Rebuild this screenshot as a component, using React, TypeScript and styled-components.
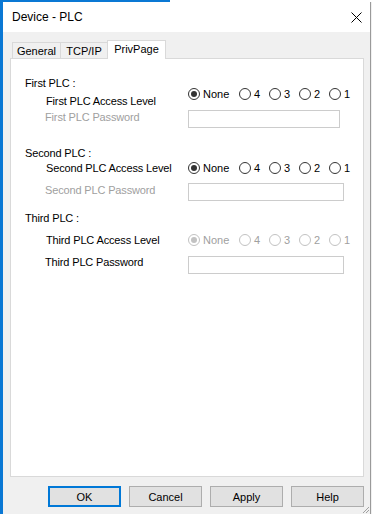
import React from 'react';
import styled, { createGlobalStyle } from 'styled-components';

const Global = createGlobalStyle`
  html, body { margin: 0; padding: 0; }
  body {
    width: 372px;
    height: 514px;
    overflow: hidden;
    background: #ffffff;
    font-family: "Liberation Sans", Arial, sans-serif;
    -webkit-font-smoothing: antialiased;
  }
`;

const Screen = styled.div`
  width: 372px;
  height: 514px;
  display: flex;
  flex-direction: column;
`;

const TopStrip = styled.div`
  height: 2px;
  display: flex;
  background: #ffffff;
`;

const TopAccent = styled.div`
  width: 170px;
  background: #0a78d4;
`;

const Frame = styled.div`
  flex: 1;
  display: flex;
  min-height: 0;
`;

const SideAccent = styled.div`
  width: 3px;
  background: #0a78d4;
`;

const RightEdge = styled.div`
  width: 2px;
  display: flex;
  flex-direction: column;
  background: #f0f0f0;
  border-left: 1px solid #9a9a9a;
  box-sizing: border-box;
`;

const Window = styled.div`
  flex: 1;
  display: flex;
  flex-direction: column;
  background: #f0f0f0;
  position: relative;
`;

const TitleBar = styled.div`
  height: 30px;
  background: #ffffff;
  display: flex;
  align-items: center;
  justify-content: space-between;
  padding: 0 8px 0 9px;
`;

const Title = styled.span`
  font-size: 12px;
  color: #000000;
  padding-bottom: 1px;
`;

const Body = styled.div`
  flex: 1;
  display: flex;
  flex-direction: column;
  padding: 8px 6px 0 7px;
`;

const TabRow = styled.div`
  display: flex;
  align-items: flex-end;
  height: 18px;
  margin-left: 2px;
  position: relative;
  z-index: 1;
`;

const Tab = styled.div<{ $active?: boolean; $w: number }>`
  box-sizing: border-box;
  width: ${(p) => p.$w}px;
  height: ${(p) => (p.$active ? 19 : 16)}px;
  margin-bottom: ${(p) => (p.$active ? -1 : 0)}px;
  margin-left: -1px;
  &:first-child { margin-left: 0; }
  border: 1px solid #d9d9d9;
  border-bottom: none;
  background: ${(p) => (p.$active ? '#ffffff' : '#f0f0f0')};
  font-size: 11px;
  color: #000000;
  display: flex;
  align-items: center;
  justify-content: center;
  padding-bottom: ${(p) => (p.$active ? 2 : 0)}px;
`;

const Panel = styled.div`
  box-sizing: border-box;
  width: 354px;
  height: 419px;
  background: #ffffff;
  border: 1px solid #d9d9d9;
  padding-top: 17px;
  display: flex;
  flex-direction: column;
`;

const Section = styled.div<{ $top: number }>`
  display: grid;
  grid-template-columns: 177px 1fr;
  margin-top: ${(p) => p.$top}px;
`;

const LeftCol = styled.div`
  display: flex;
  flex-direction: column;
  align-items: flex-start;
`;

const RightCol = styled.div<{ $top: number }>`
  display: flex;
  flex-direction: column;
  align-items: flex-start;
  padding-top: ${(p) => p.$top}px;
`;

const Text = styled.span<{ $indent: number; $gap?: number; $disabled?: boolean }>`
  display: block;
  font-size: 11px;
  line-height: 14px;
  height: 14px;
  letter-spacing: -0.15px;
  white-space: nowrap;
  margin-left: ${(p) => p.$indent}px;
  margin-top: ${(p) => p.$gap ?? 0}px;
  color: ${(p) => (p.$disabled ? '#a0a0a0' : '#000000')};
`;

const RadioGroup = styled.div`
  display: flex;
  height: 14px;
`;

const RadioItem = styled.label<{ $w: number; $disabled?: boolean }>`
  width: ${(p) => p.$w}px;
  display: flex;
  align-items: center;
  font-size: 11px;
  line-height: 14px;
  color: ${(p) => (p.$disabled ? '#a0a0a0' : '#000000')};
`;

const Circle = styled.span<{ $checked?: boolean; $disabled?: boolean }>`
  box-sizing: border-box;
  width: 12px;
  height: 12px;
  border-radius: 50%;
  border: 1px solid ${(p) => (p.$disabled ? '#c2c2c2' : '#333333')};
  background: #ffffff;
  margin-right: 3px;
  display: flex;
  align-items: center;
  justify-content: center;
  &::after {
    content: '';
    display: ${(p) => (p.$checked ? 'block' : 'none')};
    width: 6px;
    height: 6px;
    border-radius: 50%;
    background: ${(p) => (p.$disabled ? '#c2c2c2' : '#333333')};
  }
`;

const TextBox = styled.div<{ $w: number; $gap: number }>`
  box-sizing: border-box;
  width: ${(p) => p.$w}px;
  height: 18px;
  margin-top: ${(p) => p.$gap}px;
  border: 1px solid #cccccc;
  background: #ffffff;
`;

const ButtonRow = styled.div`
  display: flex;
  justify-content: flex-end;
  gap: 8px;
  margin-top: 9px;
`;

const Button = styled.div<{ $default?: boolean }>`
  box-sizing: border-box;
  width: 73px;
  height: 21px;
  background: #e1e1e1;
  border: ${(p) => (p.$default ? '2px solid #0078d7' : '1px solid #adadad')};
  font-size: 11px;
  color: #000000;
  display: flex;
  align-items: center;
  justify-content: center;
`;

const Grip = styled.svg`
  position: absolute;
  right: 0;
  bottom: 0;
`;

type Sec = {
  name: string;
  top: number;
  accessGap: number;
  passGap: number;
  radioTop: number;
  boxGap: number;
  boxW: number;
  passDisabled: boolean;
  radiosDisabled: boolean;
};

const sections: Sec[] = [
  { name: 'First', top: 0, accessGap: 4, passGap: 2, radioTop: 11, boxGap: 9, boxW: 152, passDisabled: true, radiosDisabled: false },
  { name: 'Second', top: 18, accessGap: 1, passGap: 8, radioTop: 15, boxGap: 8, boxW: 156, passDisabled: true, radiosDisabled: false },
  { name: 'Third', top: 10, accessGap: 8, passGap: 8, radioTop: 22, boxGap: 9, boxW: 156, passDisabled: false, radiosDisabled: true },
];

const levels = [
  { label: 'None', w: 51 },
  { label: '4', w: 30 },
  { label: '3', w: 30 },
  { label: '2', w: 30 },
  { label: '1', w: 30 },
];

export default function App() {
  return (
    <>
      <Global />
      <Screen>
        <TopStrip>
          <TopAccent />
        </TopStrip>
        <Frame>
          <SideAccent />
          <Window>
            <TitleBar>
              <Title>Device - PLC</Title>
              <svg width="11" height="11" viewBox="0 0 11 11">
                <path d="M0.5 0.5 L10.5 10.5 M10.5 0.5 L0.5 10.5" stroke="#000" strokeWidth="1" fill="none" />
              </svg>
            </TitleBar>
            <Body>
              <TabRow>
                <Tab $w={49}>General</Tab>
                <Tab $w={48}>TCP/IP</Tab>
                <Tab $w={59} $active>PrivPage</Tab>
              </TabRow>
              <Panel>
                {sections.map((s) => (
                  <Section key={s.name} $top={s.top}>
                    <LeftCol>
                      <Text $indent={14}>{s.name} PLC :</Text>
                      <Text $indent={35} $gap={s.accessGap}>{s.name} PLC Access Level</Text>
                      <Text $indent={34} $gap={s.passGap} $disabled={s.passDisabled}>
                        {s.name} PLC Password
                      </Text>
                    </LeftCol>
                    <RightCol $top={s.radioTop}>
                      <RadioGroup>
                        {levels.map((l, i) => (
                          <RadioItem key={l.label} $w={l.w} $disabled={s.radiosDisabled}>
                            <Circle $checked={i === 0} $disabled={s.radiosDisabled} />
                            {l.label}
                          </RadioItem>
                        ))}
                      </RadioGroup>
                      <TextBox $w={s.boxW} $gap={s.boxGap} />
                    </RightCol>
                  </Section>
                ))}
              </Panel>
              <ButtonRow>
                <Button $default>OK</Button>
                <Button>Cancel</Button>
                <Button>Apply</Button>
                <Button>Help</Button>
              </ButtonRow>
            </Body>
            <Grip width="10" height="10" viewBox="0 0 10 10">
              <path d="M9 3 L3 9 M9 6 L6 9" stroke="#a0a0a0" strokeWidth="1" fill="none" />
            </Grip>
          </Window>
          <RightEdge />
        </Frame>
      </Screen>
    </>
  );
}
